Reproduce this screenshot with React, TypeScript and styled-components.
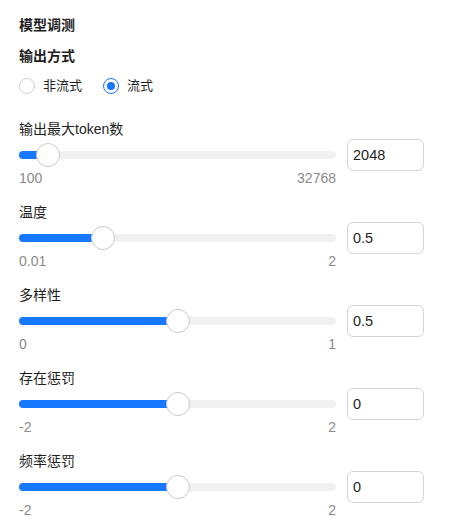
import React from "react";
import styled, { createGlobalStyle } from "styled-components";

const Global = createGlobalStyle`
  html, body { margin: 0; padding: 0; background: #fff; }
  body { font-family: "Liberation Sans", "Noto Sans CJK SC", sans-serif; color: #1f1f1f; }
  * { box-sizing: border-box; }
`;

const Panel = styled.div`
  width: 449px;
  padding: 14.5px 25px 20px 19px;
  display: flex;
  flex-direction: column;
`;

const Title = styled.div`
  font-size: 14px;
  font-weight: 700;
  line-height: 20px;
  color: #1f1f1f;
`;

const SubTitle = styled(Title)`
  margin-top: 11px;
`;

const RadioGroup = styled.div`
  display: flex;
  align-items: center;
  gap: 21px;
  margin-top: 10px;
  height: 20px;
`;

const RadioLabel = styled.label`
  display: flex;
  align-items: center;
  gap: 8px;
  font-size: 13px;
  line-height: 20px;
  color: #1f1f1f;
`;

const RadioCircle = styled.span<{ $checked?: boolean }>`
  width: 16px;
  height: 16px;
  border-radius: 50%;
  border: 1px solid ${(p) => (p.$checked ? "#1677ff" : "#d0d0d0")};
  display: flex;
  align-items: center;
  justify-content: center;
  background: #fff;
  &::after {
    content: "";
    width: 8px;
    height: 8px;
    border-radius: 50%;
    background: ${(p) => (p.$checked ? "#1677ff" : "transparent")};
  }
`;

const Blocks = styled.div`
  display: flex;
  flex-direction: column;
  gap: 16px;
  margin-top: 23.5px;
`;

const Block = styled.div`
  display: flex;
  flex-direction: column;
`;

const Label = styled.div`
  font-size: 14px;
  line-height: 20px;
  color: #1f1f1f;
`;

const Row = styled.div`
  display: grid;
  grid-template-columns: 1fr 77px;
  column-gap: 11px;
  align-items: start;
`;

const SliderCol = styled.div`
  display: flex;
  flex-direction: column;
`;

const SliderArea = styled.div`
  position: relative;
  height: 31px;
  display: flex;
  align-items: center;
`;

const Track = styled.div`
  position: relative;
  width: 100%;
  height: 8px;
  border-radius: 4px;
  background: #f1f1f1;
`;

const Fill = styled.div`
  position: absolute;
  left: 0;
  top: 0;
  bottom: 0;
  border-radius: 4px;
  background: #1677ff;
`;

const Thumb = styled.div`
  position: absolute;
  top: 50%;
  width: 24px;
  height: 24px;
  margin-left: -12px;
  margin-top: -12px;
  border-radius: 50%;
  background: #fff;
  border: 1px solid #c9c9c9;
`;

const MinMax = styled.div`
  display: flex;
  justify-content: space-between;
  font-size: 14px;
  line-height: 16px;
  color: #8a8a8a;
`;

const NumInput = styled.input`
  width: 77px;
  height: 32px;
  border: 1px solid #d4d4d4;
  border-radius: 6px;
  padding: 0 5px;
  font-family: "Liberation Sans", sans-serif;
  font-size: 14.5px;
  color: #1f1f1f;
  outline: none;
  background: #fff;
`;

type Param = { label: string; min: number; max: number; value: number; minText: string; maxText: string };

const params: Param[] = [
  { label: "输出最大token数", min: 100, max: 32768, value: 2048, minText: "100", maxText: "32768" },
  { label: "温度", min: 0.01, max: 2, value: 0.5, minText: "0.01", maxText: "2" },
  { label: "多样性", min: 0, max: 1, value: 0.5, minText: "0", maxText: "1" },
  { label: "存在惩罚", min: -2, max: 2, value: 0, minText: "-2", maxText: "2" },
  { label: "频率惩罚", min: -2, max: 2, value: 0, minText: "-2", maxText: "2" },
];

function Slider({ p }: { p: Param }) {
  const ratio = (p.value - p.min) / (p.max - p.min);
  const pos = `calc(12px + (100% - 24px) * ${ratio})`;
  return (
    <SliderArea>
      <Track>
        <Fill style={{ width: pos }} />
        <Thumb style={{ left: pos }} />
      </Track>
    </SliderArea>
  );
}

export default function App() {
  return (
    <>
      <Global />
      <Panel>
        <Title>模型调测</Title>
        <SubTitle>输出方式</SubTitle>
        <RadioGroup>
          <RadioLabel>
            <RadioCircle />
            非流式
          </RadioLabel>
          <RadioLabel>
            <RadioCircle $checked />
            流式
          </RadioLabel>
        </RadioGroup>
        <Blocks>
          {params.map((p) => (
            <Block key={p.label}>
              <Label>{p.label}</Label>
              <Row>
                <SliderCol>
                  <Slider p={p} />
                  <MinMax>
                    <span>{p.minText}</span>
                    <span>{p.maxText}</span>
                  </MinMax>
                </SliderCol>
                <NumInput defaultValue={String(p.value)} />
              </Row>
            </Block>
          ))}
        </Blocks>
      </Panel>
    </>
  );
}
